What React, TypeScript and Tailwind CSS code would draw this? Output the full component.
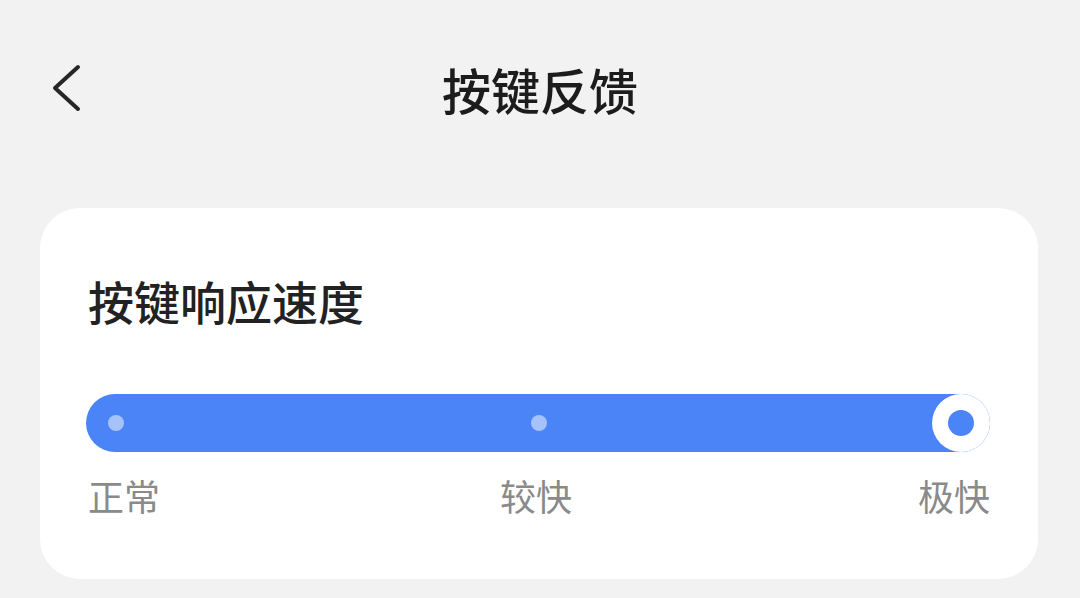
const font = { fontFamily: '"Noto Sans CJK SC", "Noto Sans", sans-serif' };

function BackArrow() {
  return (
    <svg width="40" height="48" viewBox="0 0 40 48" fill="none">
      <polyline
        points="34,3 11,24 34,45"
        stroke="#262626"
        strokeWidth="4"
        strokeLinecap="round"
        strokeLinejoin="round"
      />
    </svg>
  );
}

export default function App() {
  return (
    <div className="w-[1080px] h-[598px] bg-[#f2f2f2] overflow-hidden" style={font}>
      {/* Top bar */}
      <div className="grid grid-cols-[1fr_auto_1fr] items-center h-[176px] px-[44px]">
        <button className="flex items-center">
          <BackArrow />
        </button>
        <h1 className="text-[49px] leading-[49px] font-medium text-[#1c1c1c]">按键反馈</h1>
        <div />
      </div>

      {/* Speed card */}
      <div className="ml-[40px] mr-[42px] mt-[32px] bg-white rounded-[40px] pl-[46px] pr-[48px] pt-[69px] pb-[66px]">
        <h2 className="text-[46px] leading-[46px] font-medium text-[#222] pl-[2px]">按键响应速度</h2>

        <div className="relative mt-[71px] h-[58px] rounded-full bg-[#4a84f6]">
          <span className="absolute left-[22px] top-[21px] w-[16px] h-[16px] rounded-full bg-[#a6c2fb]" />
          <span className="absolute left-[445px] top-[21px] w-[16px] h-[16px] rounded-full bg-[#a6c2fb]" />
          <span className="absolute right-0 top-0 w-[58px] h-[58px] rounded-full bg-white flex items-center justify-center shadow-[0_0_2px_rgba(0,0,0,0.08)]">
            <span className="w-[26px] h-[26px] rounded-full bg-[#4a84f6]" />
          </span>
        </div>

        <div className="flex justify-between mt-[25px] text-[36px] leading-[36px] text-[#8a8a8a] pl-[2px]">
          <span>正常</span>
          <span className="pr-[6px]">较快</span>
          <span>极快</span>
        </div>
      </div>
    </div>
  );
}
